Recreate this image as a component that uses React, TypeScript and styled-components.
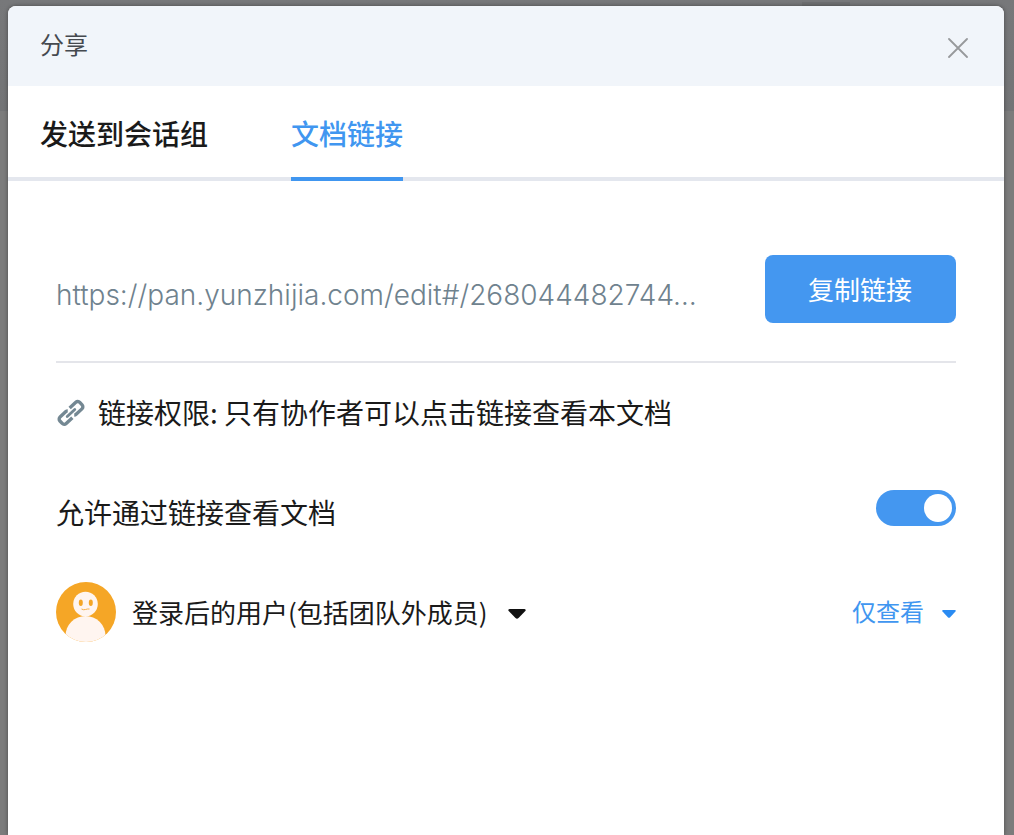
import React, { useState } from 'react';
import styled, { createGlobalStyle } from 'styled-components';

const GlobalStyle = createGlobalStyle`
  *, *::before, *::after { box-sizing: border-box; }
  body {
    margin: 0;
    font-family: "Noto Sans CJK SC", "Noto Sans", sans-serif;
    color: #1a1a1a;
  }
  button, select, input { font-family: inherit; }
`;

const Backdrop = styled.div`
  display: flex;
  min-height: 100vh;
  padding: 6px 10px 0 8px;
  background:
    linear-gradient(#6f7072, #6f7072) 83% 2px / 48px 8px no-repeat,
    linear-gradient(#77787a, #737476) 0 0 / 100% 111px no-repeat,
    #7c7c7c;
`;

const Dialog = styled.section`
  flex: 1;
  min-width: 0;
  background: #fff;
  border-radius: 8px 8px 0 0;
  box-shadow: 0 0 4px rgba(0, 0, 0, 0.4);
`;

const Header = styled.header`
  display: flex;
  align-items: center;
  justify-content: space-between;
  height: 80px;
  padding: 0 32px;
  background: #f1f5fa;
  border-radius: 8px 8px 0 0;
`;

const Title = styled.h1`
  margin: 0;
  padding-bottom: 4px;
  font-size: 24px;
  line-height: 32px;
  font-weight: 400;
  color: #45494f;
`;

const CloseButton = styled.button`
  display: flex;
  padding: 6px 4px 2px;
  border: 0;
  background: none;
  color: #97999c;
  cursor: pointer;
`;

const TabBar = styled.div`
  display: flex;
  gap: 83px;
  height: 95px;
  padding: 0 32px;
  box-shadow: inset 0 -4px #e4e7ee;
`;

const Tab = styled.button<{ $active: boolean }>`
  padding: 2px 0 0;
  border: 0;
  border-bottom: 4px solid ${(p) => (p.$active ? '#4096f0' : 'transparent')};
  background: none;
  color: ${(p) => (p.$active ? '#4096f0' : '#1a1a1a')};
  font-size: 28px;
  line-height: 40px;
  font-weight: 500;
  cursor: pointer;
`;

const Panel = styled.div`
  padding: 74px 48px 48px;
`;

const LinkRow = styled.div`
  display: flex;
  align-items: center;
  justify-content: space-between;
  gap: 48px;
  padding-bottom: 38px;
  border-bottom: 2px solid #e4e5ea;
`;

const LinkText = styled.p`
  min-width: 0;
  margin: 0;
  padding-top: 12px;
  overflow: hidden;
  white-space: nowrap;
  text-overflow: ellipsis;
  font-family: Inter, "Noto Sans CJK SC", sans-serif;
  font-size: 28px;
  line-height: 40px;
  font-weight: 300;
  color: #6f828e;
`;

const CopyButton = styled.button`
  flex: none;
  height: 68px;
  padding: 0 44px 0 43px;
  border: 0;
  border-radius: 8px;
  background: #4497f0;
  color: #fff;
  font-size: 26px;
  line-height: 40px;
  cursor: pointer;
`;

const Permission = styled.p`
  display: flex;
  align-items: center;
  gap: 12px;
  margin: 29px 0 57px;
  font-size: 28px;
  line-height: 40px;
`;

const SwitchRow = styled.label`
  display: flex;
  align-items: flex-start;
  justify-content: space-between;
  margin-bottom: 48px;
  padding-top: 1px;
  font-size: 28px;
  line-height: 44px;
`;

const Switch = styled.input`
  appearance: none;
  display: flex;
  justify-content: flex-start;
  flex: none;
  width: 80px;
  height: 36px;
  margin: 0;
  padding: 4px;
  border-radius: 18px;
  background: #c5cad1;
  cursor: pointer;

  &::before {
    content: "";
    width: 28px;
    height: 28px;
    border-radius: 50%;
    background: #fff;
  }

  &:checked {
    justify-content: flex-end;
    background: #4497f0;
  }
`;

const AccessRow = styled.div`
  display: flex;
  align-items: center;
  justify-content: space-between;
`;

const Audience = styled.div`
  display: flex;
  align-items: center;
  gap: 16px;
`;

const SelectBox = styled.div`
  display: grid;
  align-items: center;

  > * { grid-area: 1 / 1; }
  > svg { justify-self: end; margin-top: 4px; pointer-events: none; }
`;

const Select = styled.select<{ $accent?: boolean }>`
  appearance: none;
  field-sizing: content;
  margin: 0;
  padding: 0 ${(p) => (p.$accent ? 32 : 38)}px ${(p) => (p.$accent ? 2 : 0)}px 0;
  border: 0;
  background: none;
  color: ${(p) => (p.$accent ? '#4096f0' : '#1a1a1a')};
  font-size: ${(p) => (p.$accent ? 24 : 26)}px;
  line-height: 40px;
  cursor: pointer;
`;

const CloseIcon = () => (
  <svg width="20" height="20" viewBox="0 0 20 20" fill="none" stroke="currentColor" strokeWidth="1.8" strokeLinecap="round" aria-hidden="true">
    <path d="M1 1L19 19M19 1L1 19" />
  </svg>
);

const ChainIcon = () => (
  <svg width="30" height="30" viewBox="-1 -2 32 32" fill="none" stroke="#748893" strokeWidth="3.6" strokeLinejoin="round" aria-hidden="true">
    <g transform="rotate(-43 15 15)">
      <path d="M12.500 19.800H3.500a3 3 0 0 1-3-3v-3.600a3 3 0 0 1 3-3H12a3 3 0 0 1 2 .8" />
      <path d="M17.500 10.200h9a3 3 0 0 1 3 3v3.600a3 3 0 0 1-3 3H18a3 3 0 0 1-2-.8" />
      <path d="M9.500 15h11" strokeWidth="3" strokeLinecap="round" />
    </g>
  </svg>
);

const Avatar = () => (
  <svg width="60" height="60" viewBox="0 0 60 60" aria-hidden="true">
    <defs>
      <clipPath id="avatar-clip"><circle cx="30" cy="30" r="30" /></clipPath>
    </defs>
    <g clipPath="url(#avatar-clip)">
      <rect width="60" height="60" fill="#f5a626" />
      <circle cx="29.500" cy="54" r="20" fill="#fff5f0" />
      <circle cx="29.500" cy="22" r="12.300" fill="#fff5f0" />
      <ellipse cx="24.800" cy="20.800" rx="2" ry="3.200" fill="#f5a626" />
      <ellipse cx="34.800" cy="20.800" rx="2" ry="3.200" fill="#f5a626" />
      <path d="M25.500 27q2 1.200 4 .5t4-.5" fill="none" stroke="#f5b04a" strokeWidth="1" />
    </g>
  </svg>
);

const Caret = ({ width, height, color }: { width: number; height: number; color: string }) => (
  <svg width={width} height={height} viewBox="0 0 18 10" preserveAspectRatio="none" fill={color} aria-hidden="true">
    <path d="M1.500 0h15q2 .5.800 2L10.500 9q-1.500 1.500-3 0L.700 2Q-.500.500 1.500 0z" />
  </svg>
);

const tabs = ['发送到会话组', '文档链接'];

export default function App() {
  const [active, setActive] = useState(1);
  const [allowed, setAllowed] = useState(true);

  return (
    <>
      <GlobalStyle />
      <Backdrop>
        <Dialog role="dialog" aria-labelledby="share-title">
          <Header>
            <Title id="share-title">分享</Title>
            <CloseButton type="button" aria-label="关闭"><CloseIcon /></CloseButton>
          </Header>
          <TabBar role="tablist">
            {tabs.map((name, i) => (
              <Tab key={name} type="button" role="tab" aria-selected={i === active} $active={i === active} onClick={() => setActive(i)}>
                {name}
              </Tab>
            ))}
          </TabBar>
          <Panel role="tabpanel">
            <LinkRow>
              <LinkText>https://pan.yunzhijia.com/edit#/268044482744…</LinkText>
              <CopyButton type="button">复制链接</CopyButton>
            </LinkRow>
            <Permission>
              <ChainIcon />
              链接权限: 只有协作者可以点击链接查看本文档
            </Permission>
            <SwitchRow>
              允许通过链接查看文档
              <Switch type="checkbox" role="switch" checked={allowed} onChange={(e) => setAllowed(e.target.checked)} />
            </SwitchRow>
            <AccessRow>
              <Audience>
                <Avatar />
                <SelectBox>
                  <Select aria-label="可访问的用户">
                    <option>登录后的用户(包括团队外成员)</option>
                  </Select>
                  <Caret width={18} height={10} color="#111" />
                </SelectBox>
              </Audience>
              <SelectBox>
                <Select $accent aria-label="访问权限">
                  <option>仅查看</option>
                </Select>
                <Caret width={14} height={8} color="#2a8bf2" />
              </SelectBox>
            </AccessRow>
          </Panel>
        </Dialog>
      </Backdrop>
    </>
  );
}
